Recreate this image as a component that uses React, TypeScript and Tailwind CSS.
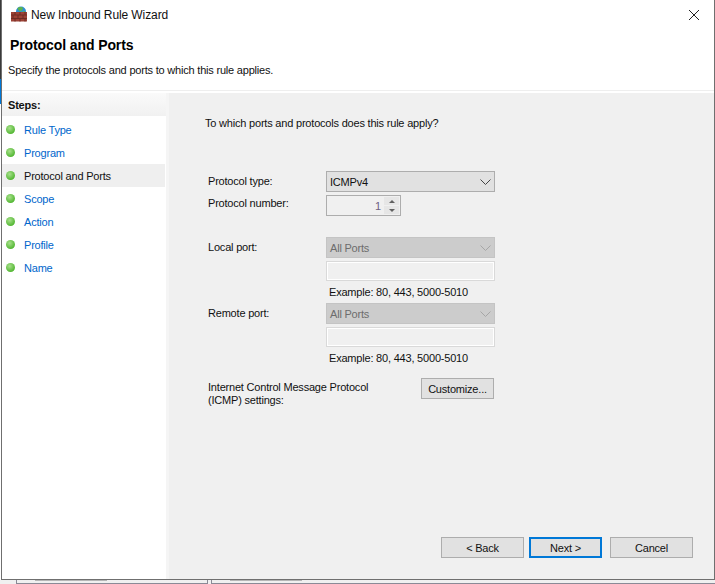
const font = "font-['Liberation_Sans',Arial,sans-serif]";

const steps = ['Rule Type', 'Program', 'Protocol and Ports', 'Scope', 'Action', 'Profile', 'Name'];

function FirewallIcon() {
  return (
    <svg width="16" height="16" viewBox="0 0 16 16" className="mb-[2px] shrink-0">
      <circle cx="10" cy="5.500" r="5" fill="#2f8fd0" />
      <path d="M6.500 2c1.500-1.400 4.500-1.400 5.500 0l-1 2.500-2.500 1-1-1.500zM10.500 6l3-1 1.200 1.500-2 2.500-2-1z" fill="#5fb44a" />
      <rect x="0" y="6" width="16" height="9.500" fill="#9c4236" />
      <path d="M0 9h16M0 12.500h16M4 6v3M9 6v3M14 6v3M2 9v3.500M7 9v3.500M12 9v3.500M4 12.500v3M9 12.500v3M14 12.500v3" stroke="#6e2c24" strokeWidth="1" fill="none" />
    </svg>
  );
}

function Chevron({ color }: { color: string }) {
  return (
    <svg width="11" height="6" viewBox="0 0 11 6" fill="none" stroke={color} strokeWidth="1">
      <path d="M0.500 0.500 5.500 5.500 10.500 0.500" />
    </svg>
  );
}

function Select({ value, disabled }: { value: string; disabled?: boolean }) {
  return (
    <div
      className={`flex h-[21px] w-[169px] items-center justify-between border pl-[3px] pr-[3px] ${
        disabled ? 'border-[#c4c4c4] bg-[#cccccc] text-[#6d6d6d]' : 'border-[#adadad] bg-[#e1e1e1] text-[#111]'
      }`}
    >
      <span>{value}</span>
      <Chevron color={disabled ? '#a6a6a6' : '#444'} />
    </div>
  );
}

function PortField({ label }: { label: string }) {
  return (
    <div className="flex h-[66px]">
      <div className="w-[118px] pt-[3px]">{label}</div>
      <div className="flex flex-col">
        <Select value="All Ports" disabled />
        <div className="mt-[3px] h-[20px] w-[169px] border border-[#d9d9d9] bg-[#f0f0f0] shadow-[inset_0_0_0_1px_#fff]" />
        <div className="mt-[3px] pl-[3px] leading-[16px]">Example: 80, 443, 5000-5010</div>
      </div>
    </div>
  );
}

function WizardButton({ label, primary }: { label: string; primary?: boolean }) {
  return (
    <button
      className={`h-[21px] bg-[#e1e1e1] text-[#111] ${
        primary ? 'w-[73px] border-2 border-[#0078d7]' : 'w-[83px] border border-[#adadad]'
      }`}
    >
      {label}
    </button>
  );
}

export default function App() {
  return (
    <div className={`flex h-[584px] w-[715px] flex-col overflow-hidden bg-[#f0f0f0] text-[11px] leading-[14px] tracking-[-0.2px] text-[#111] ${font}`}>
      <div className="flex h-[580px] shrink-0">
        {/* sliver of the window behind, at the left edge */}
        <div className="flex w-[1px] shrink-0 flex-col bg-white">
          <div className="h-[79px] bg-[#3a3a3a]" />
          <div className="h-[25px] bg-[#0078d7]" />
        </div>
        <div className="flex min-w-0 flex-1 flex-col border-b border-l border-r border-[#6f6f6f] bg-white">
          <div className="flex h-[30px] items-center pl-[9px] pr-[14px]">
            <FirewallIcon />
            <span className="ml-[4px] flex-1 text-[12px] tracking-[-0.1px]">New Inbound Rule Wizard</span>
            <svg width="12" height="12" viewBox="0 0 12 12" stroke="#222" strokeWidth="1">
              <path d="M1 1 11 11M11 1 1 11" />
            </svg>
          </div>
          <div className="h-[61px] border-b border-[#eeeeee] pl-[6px]">
            <div className="pl-[2px] pt-[7px] text-[14px] font-bold leading-[16px] tracking-[-0.1px] text-black">Protocol and Ports</div>
            <div className="mt-[10px]">Specify the protocols and ports to which this rule applies.</div>
          </div>
          <div className="flex min-h-0 flex-1 pt-[2px]">
            <div className="w-[167px] shrink-0 border-r-[3px] border-[#f5f5f5] bg-white">
              <div className="flex h-[23px] items-center bg-gradient-to-b from-[#fafafa] to-[#f1f1f1] pl-[6px] font-bold">Steps:</div>
              <div className="mt-[2px] flex flex-col">
                {steps.map((s) => (
                  <div
                    key={s}
                    className={`mr-[1px] flex h-[23px] items-center pl-[4px] ${s === 'Protocol and Ports' ? 'bg-[#efefef] text-[#111]' : 'text-[#0066cc]'}`}
                  >
                    <span className="h-[9px] w-[9px] rounded-full bg-[radial-gradient(circle_at_40%_35%,#a8e08c,#4fb52f_75%)]" />
                    <span className="ml-[9px]">{s}</span>
                  </div>
                ))}
              </div>
            </div>
            <div className="flex flex-1 flex-col bg-[#f0f0f0] pl-[36px] pr-[21px]">
              <div className="mt-[23px]">To which ports and protocols does this rule apply?</div>
              <div className="ml-[3px] mt-[41px] flex flex-col">
                <div className="flex">
                  <div className="w-[118px] pt-[3px]">Protocol type:</div>
                  <Select value="ICMPv4" />
                </div>
                <div className="mt-[3px] flex">
                  <div className="w-[118px] pt-[1px]">Protocol number:</div>
                  <div className="flex h-[21px] w-[75px] items-center justify-between border border-[#adadad] bg-[#f0f0f0] pr-[1px] text-[#6d5f80]">
                    <span className="flex-1 pr-[3px] text-right">1</span>
                    <div className="flex w-[15px] flex-col gap-[1px]">
                      <div className="flex h-[8px] items-center justify-center bg-[#e6e6e6]">
                        <span className="h-0 w-0 border-x-[3px] border-b-[3px] border-x-transparent border-b-[#606060]" />
                      </div>
                      <div className="flex h-[8px] items-center justify-center bg-[#e6e6e6]">
                        <span className="h-0 w-0 border-x-[3px] border-t-[3px] border-x-transparent border-t-[#606060]" />
                      </div>
                    </div>
                  </div>
                </div>
                <div className="mt-[21px] flex flex-col">
                  <PortField label="Local port:" />
                  <PortField label="Remote port:" />
                </div>
                <div className="mt-[9px] flex">
                  <div className="w-[213px] pt-[3px] leading-[13px]">
                    Internet Control Message Protocol
                    <br />
                    (ICMP) settings:
                  </div>
                  <button className="h-[21px] w-[73px] border border-[#adadad] bg-[#e1e1e1]">Customize...</button>
                </div>
              </div>
              <div className="mb-[21px] mt-auto flex justify-end">
                <WizardButton label="< Back" />
                <span className="w-[5px]" />
                <WizardButton label="Next >" primary />
                <span className="w-[8px]" />
                <WizardButton label="Cancel" />
              </div>
            </div>
          </div>
        </div>
      </div>
      {/* bottom of the windows behind the wizard */}
      <div className="flex min-h-0 flex-1 pl-[16px]">
        <div className="h-full w-[192px] border-x border-b border-[#8a8a96] pl-[18px]">
          <div className="h-[1px] w-[72px] bg-[#b5b5b5]" />
        </div>
        <div className="ml-[3px] h-full flex-1 border-l border-b border-[#8a8a96] pl-[18px]">
          <div className="h-[1px] w-[72px] bg-[#b5b5b5]" />
        </div>
      </div>
    </div>
  );
}
